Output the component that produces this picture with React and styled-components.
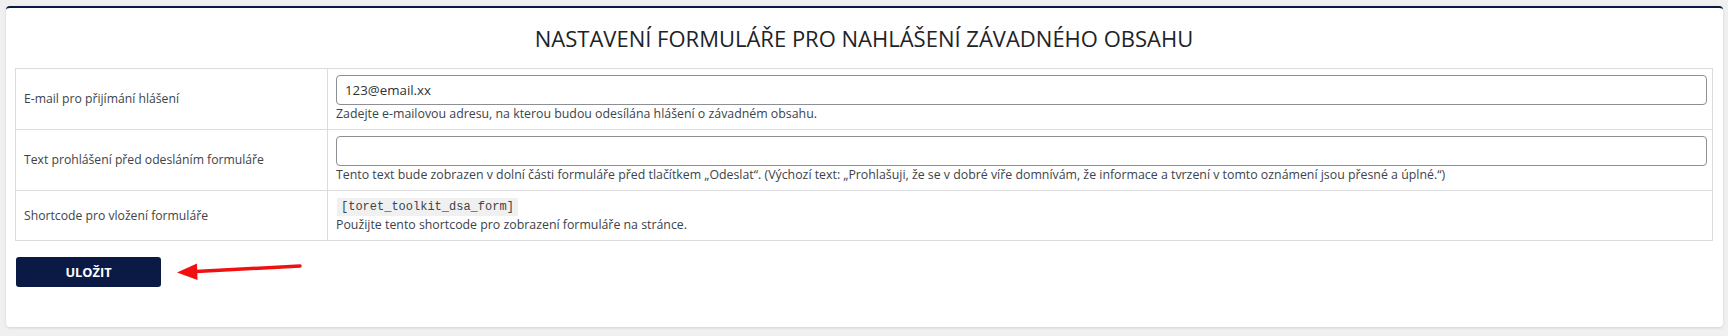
import { createGlobalStyle } from 'styled-components';
import styled from 'styled-components';

const GlobalStyle = createGlobalStyle`
  body {
    margin: 0;
    background: #f0f0f1;
    font-family: 'Open Sans', 'Noto Sans', sans-serif;
    color: #3c434a;
  }
`;

const Page = styled.div`
  padding: 6px 5px 9px 6px;
`;

const Card = styled.form`
  background: #fff;
  border-top: 2px solid #0b1a45;
  border-radius: 4px;
  box-shadow: 0 1px 3px rgba(0, 0, 0, 0.12);
  padding: 0 10px 40px 9px;
`;

const Title = styled.h1`
  margin: 0;
  padding: 15px 0;
  font-size: 22px;
  line-height: 30px;
  font-weight: 500;
  color: #1d2327;
  text-align: center;
`;

const Table = styled.table`
  width: 100%;
  border-collapse: collapse;
  border: 1px solid #dcdcde;

  tr {
    border-top: 1px solid #dcdcde;
  }
`;

const LabelCell = styled.th`
  width: 295px;
  padding: 6px 8px;
  border-right: 1px solid #dcdcde;
  text-align: left;
  font-weight: 400;
  font-size: 12.2px;
  line-height: 18px;
  color: #3c434a;
  vertical-align: middle;
`;

const FieldCell = styled.td`
  padding: ${(p) => (p.$compact ? '7px 6px 6px 8px' : '6px 5px 6px 8px')};
  font-size: 12.35px;
  line-height: 18px;
  vertical-align: middle;
`;

const TextInput = styled.input`
  display: block;
  box-sizing: border-box;
  width: 100%;
  height: 30px;
  margin: 0;
  padding: 0 8px;
  border: 1px solid #8c8f94;
  border-radius: 4px;
  font-family: 'Open Sans', 'Noto Sans', sans-serif;
  font-size: 13.3px;
  color: #2c3338;
  background: #fff;
`;

const Description = styled.p`
  margin: 0;
  height: 18px;
  font-size: 12.35px;
  line-height: 18px;
  color: #3c434a;
  white-space: nowrap;
`;

const Code = styled.code`
  display: inline-block;
  vertical-align: top;
  margin: 0 0 0 1px;
  padding: 0 4px;
  background: #f0f0f1;
  font-family: 'Liberation Mono', 'DejaVu Sans Mono', monospace;
  font-size: 12px;
  line-height: 18px;
  color: #3c434a;
`;

const Actions = styled.div`
  display: flex;
  align-items: center;
  gap: 15px;
  margin-top: 16px;
  padding-left: 1px;
`;

const SaveButton = styled.button`
  width: 145px;
  height: 30px;
  border: 0;
  border-radius: 3px;
  background: #0b1a45;
  color: #fff;
  font-family: 'Open Sans', 'Noto Sans', sans-serif;
  font-size: 12.8px;
  font-weight: 700;
  cursor: pointer;
`;

const rows = [
  {
    label: 'E-mail pro přijímání hlášení',
    value: '123@email.xx',
    help: 'Zadejte e-mailovou adresu, na kterou budou odesílána hlášení o závadném obsahu.',
  },
  {
    label: 'Text prohlášení před odesláním formuláře',
    value: '',
    help:
      'Tento text bude zobrazen v dolní části formuláře před tlačítkem „Odeslat“. (Výchozí text: „Prohlašuji, že se v dobré víře domnívám, že informace a tvrzení v tomto oznámení jsou přesné a úplné.“)',
  },
];

function Arrow() {
  return (
    <svg width="126" height="22" viewBox="0 0 126 22">
      <path d="M20 10.5 L124 5" stroke="#f01010" strokeWidth="3.5" strokeLinecap="round" />
      <path d="M1 11.5 L21 2.5 L21.5 19 Z" fill="#f01010" />
    </svg>
  );
}

export default function App() {
  return (
    <Page>
      <GlobalStyle />
      <Card onSubmit={(e) => e.preventDefault()}>
        <Title>NASTAVENÍ FORMULÁŘE PRO NAHLÁŠENÍ ZÁVADNÉHO OBSAHU</Title>
        <Table>
          <tbody>
            {rows.map((row) => (
              <tr key={row.label}>
                <LabelCell>{row.label}</LabelCell>
                <FieldCell>
                  <TextInput type="text" defaultValue={row.value} />
                  <Description>{row.help}</Description>
                </FieldCell>
              </tr>
            ))}
            <tr>
              <LabelCell>Shortcode pro vložení formuláře</LabelCell>
              <FieldCell $compact>
                <Code>[toret_toolkit_dsa_form]</Code>
                <Description>Použijte tento shortcode pro zobrazení formuláře na stránce.</Description>
              </FieldCell>
            </tr>
          </tbody>
        </Table>
        <Actions>
          <SaveButton type="submit">ULOŽIT</SaveButton>
          <Arrow />
        </Actions>
      </Card>
    </Page>
  );
}
